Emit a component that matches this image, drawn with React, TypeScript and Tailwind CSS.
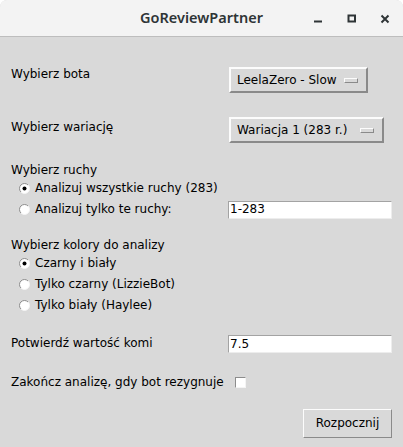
import React from "react";

const font = { fontFamily: '"DejaVu Sans", "Liberation Sans", sans-serif' };

function Radio({ checked, label }: { checked?: boolean; label: string }) {
  return (
    <div className="flex h-[21px] items-center pl-[8px]">
      <svg width="11" height="11" viewBox="0 0 11 11" className="shrink-0">
        <circle cx="5.5" cy="5.5" r="5" fill="#ffffff" />
        <path d="M1.96 9.04 A5 5 0 0 1 9.04 1.96" fill="none" stroke="#8c8c8c" strokeWidth="1" />
        <path d="M9.04 1.96 A5 5 0 0 1 1.96 9.04" fill="none" stroke="#f4f4f4" strokeWidth="1" />
        {checked && <circle cx="5.5" cy="5.5" r="2" fill="#000000" />}
      </svg>
      <span className="ml-[5px] leading-[15px]">{label}</span>
    </div>
  );
}

function OptionMenu({ text, width }: { text: string; width: string }) {
  return (
    <div
      className={`${width} flex h-[26px] items-center justify-between border-2 border-t-[#fcfcfc] border-l-[#fcfcfc] border-r-[#8a8a8a] border-b-[#8a8a8a] bg-[#d9d9d9] pl-[6px] pr-[8px]`}
    >
      <span className="leading-[15px]">{text}</span>
      <span className="block h-[5px] w-[14px] border border-t-[#fcfcfc] border-l-[#fcfcfc] border-r-[#8a8a8a] border-b-[#8a8a8a] bg-[#d9d9d9]" />
    </div>
  );
}

function Entry({ value }: { value: string }) {
  return (
    <div className="flex h-[18px] w-[164px] items-center border border-t-[#a3a3a3] border-l-[#a3a3a3] border-r-[#ededed] border-b-[#ededed] bg-white pl-[1px]">
      <span className="leading-[15px]">{value}</span>
    </div>
  );
}

export default function App() {
  return (
    <div className="h-[447px] w-[403px] overflow-hidden bg-white">
      <div className="flex h-[447px] w-[403px] flex-col overflow-hidden rounded-t-[7px] bg-[#d9d9d9] text-[12px] text-black" style={font}>
        {/* Title bar */}
        <div className="relative flex h-[37px] shrink-0 items-center justify-center border-b border-[#bdbdbd] bg-[#f3f3f3]">
          <span
            className="text-[14.5px] font-semibold text-[#2e3436]"
            style={{ fontFamily: '"Noto Sans", "Open Sans", sans-serif' }}
          >
            GoReviewPartner
          </span>
          <div className="absolute right-[13px] top-[14px] flex items-start">
            <svg width="10" height="10" viewBox="0 0 10 10" className="mr-[24px]">
              <rect x="1" y="6.5" width="8" height="2" fill="#2e3436" />
            </svg>
            <svg width="10" height="10" viewBox="0 0 10 10" className="mr-[23px]">
              <rect x="1.5" y="1.5" width="6.5" height="6" fill="none" stroke="#2e3436" strokeWidth="2" />
            </svg>
            <svg width="10" height="10" viewBox="0 0 10 10">
              <path d="M1.5 1.5 L8.5 8.5 M8.5 1.5 L1.5 8.5" stroke="#2e3436" strokeWidth="2" />
            </svg>
          </div>
        </div>

        {/* Content */}
        <div className="flex flex-col px-[11px]">
          {/* Bot */}
          <div className="mt-[30px] flex items-start">
            <span className="w-[218px] leading-[15px]">Wybierz bota</span>
            <OptionMenu text="LeelaZero - Slow" width="w-[139px]" />
          </div>

          {/* Variation */}
          <div className="mt-[24px] flex items-start">
            <span className="mt-[3px] w-[218px] leading-[15px]">Wybierz wariację</span>
            <OptionMenu text="Wariacja 1 (283 r.)" width="w-[155px]" />
          </div>

          {/* Moves */}
          <div className="mt-[20px] leading-[15px]">Wybierz ruchy</div>
          <Radio checked label="Analizuj wszystkie ruchy (283)" />
          <div className="flex items-center">
            <div className="w-[217px]">
              <Radio label="Analizuj tylko te ruchy:" />
            </div>
            <Entry value="1-283" />
          </div>

          {/* Colors */}
          <div className="mt-[18px] leading-[15px]">Wybierz kolory do analizy</div>
          <Radio checked label="Czarny i biały" />
          <Radio label="Tylko czarny (LizzieBot)" />
          <Radio label="Tylko biały (Haylee)" />

          {/* Komi */}
          <div className="mt-[19px] flex items-start">
            <span className="mt-[1px] w-[217px] leading-[15px]">Potwierdź wartość komi</span>
            <Entry value="7.5" />
          </div>

          {/* Resign */}
          <div className="mt-[22px] flex items-start">
            <span className="w-[224px] whitespace-nowrap leading-[15px]">Zakończ analizę, gdy bot rezygnuje</span>
            <span className="mt-[2px] block h-[11px] w-[11px] border border-t-[#8c8c8c] border-l-[#8c8c8c] border-r-[#f4f4f4] border-b-[#f4f4f4] bg-white" />
          </div>

          {/* Start */}
          <div className="mt-[19px] flex justify-end">
            <button className="flex h-[29px] w-[89px] items-center justify-center border border-t-[#fcfcfc] border-l-[#fcfcfc] border-r-[#8a8a8a] border-b-[#8a8a8a] bg-[#d9d9d9] leading-[15px]">
              Rozpocznij
            </button>
          </div>
        </div>
      </div>
    </div>
  );
}
